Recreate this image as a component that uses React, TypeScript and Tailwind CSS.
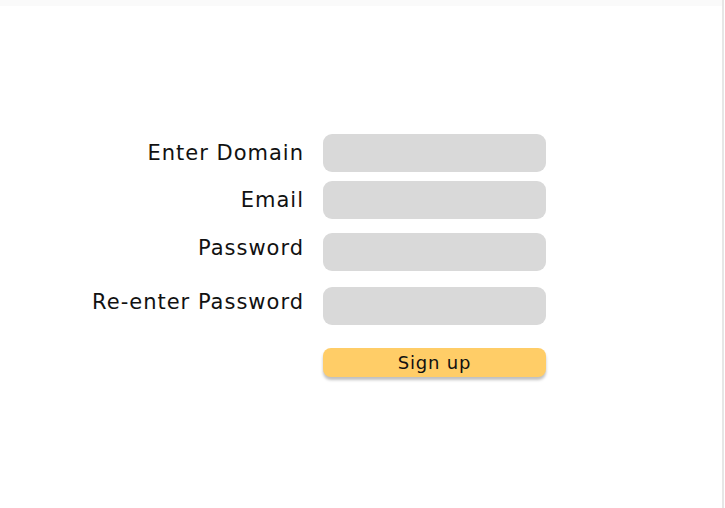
import React from 'react';

const rows = [
  { label: 'Enter Domain', mt: 'mt-0', shift: '' },
  { label: 'Email', mt: 'mt-[9px]', shift: '' },
  { label: 'Password', mt: 'mt-[14px]', shift: '-translate-y-[4px]' },
  { label: 'Re-enter Password', mt: 'mt-[16px]', shift: '-translate-y-[4px]' },
];

export default function App() {
  return (
    <div
      className="w-[725px] h-[508px] bg-white flex overflow-hidden"
      style={{ fontFamily: '"DejaVu Sans", "Open Sans", sans-serif' }}
    >
      <div className="flex-1 flex flex-col">
        {/* faint top strip */}
        <div className="h-[6px] bg-[#fafafa]" />
        <div className="pt-[128px] flex flex-col">
          {rows.map((r) => (
            <div key={r.label} className={`flex items-center ${r.mt}`}>
              <label
                className={`w-[305px] text-right pr-[1px] text-[21px] leading-none text-[#111] tracking-[1px] ${r.shift}`}
              >
                {r.label}
              </label>
              <input
                type="text"
                className="ml-[18px] w-[223px] h-[38px] rounded-[9px] bg-[#d9d9d9] outline-none border-0"
              />
            </div>
          ))}
          <div className="flex mt-[23px]">
            <div className="w-[305px]" />
            <button className="ml-[18px] w-[223px] h-[29px] rounded-[8px] bg-[#ffcd67] text-[18px] leading-none text-[#111] tracking-[0.8px] shadow-[0_3px_3px_rgba(0,0,0,0.25)]">
              Sign up
            </button>
          </div>
        </div>
      </div>
      <div className="w-[2px] bg-[#e6e6e6] mr-px" />
    </div>
  );
}
